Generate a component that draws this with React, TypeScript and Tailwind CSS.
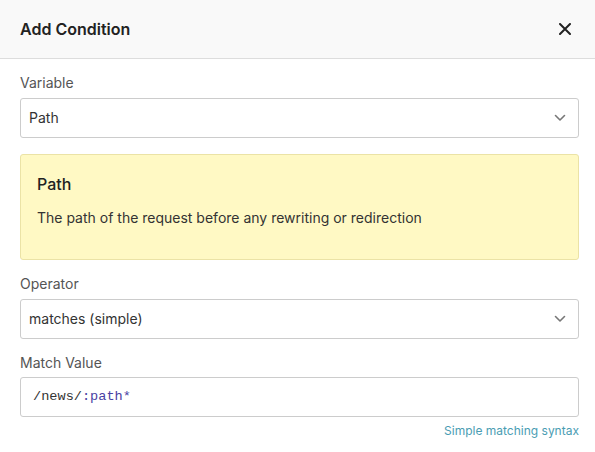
import React from 'react';

const Chevron = () => (
  <svg width="12" height="8" viewBox="0 0 12 8" className="shrink-0">
    <path d="M1.5 1.5 L6 6 L10.5 1.5" fill="none" stroke="#777" strokeWidth="1.6" strokeLinecap="round" strokeLinejoin="round" />
  </svg>
);

const Select = ({ value }: { value: string }) => (
  <div className="flex h-10 items-center justify-between rounded-[3px] border border-[#cccccc] bg-white pl-2 pr-3 text-sm text-[#333]">
    <span>{value}</span>
    <Chevron />
  </div>
);

const Label = ({ children }: { children: React.ReactNode }) => (
  <div className="mb-[5px] h-5 text-sm leading-5 text-[#555]">{children}</div>
);

export default function App() {
  return (
    <div className="h-[452px] w-[595px] bg-white font-['Inter',sans-serif]">
      <div className="flex h-[59px] items-center justify-between border-b border-[#dddddd] bg-[#f9f9f9] pl-5 pr-6">
        <h2 className="text-base font-semibold text-[#222]">Add Condition</h2>
        <button aria-label="Close" className="flex items-center">
          <svg width="12" height="12" viewBox="0 0 12 12">
            <path d="M1 1 L11 11 M11 1 L1 11" stroke="#222" strokeWidth="2" strokeLinecap="round" />
          </svg>
        </button>
      </div>

      <div className="pl-5 pr-[16px] pt-[14px]">
        <Label>Variable</Label>
        <Select value="Path" />

        <div className="mt-4 rounded-[3px] border border-[#ebe3a6] bg-[#fff9c4] px-4 pb-[31px] pt-[17px]">
          <div className="text-base font-medium leading-6 text-[#222]">Path</div>
          <p className="mt-3 text-sm leading-5 text-[#333]">
            The path of the request before any rewriting or redirection
          </p>
        </div>

        <div className="mt-[14px]">
          <Label>Operator</Label>
          <Select value="matches (simple)" />
        </div>

        <div className="mt-[14px]">
          <div className="mb-1 h-5 text-sm leading-5 text-[#555]">Match Value</div>
          <div className="flex h-10 items-center rounded-[3px] border border-[#cccccc] bg-white px-3 font-['Liberation_Mono',monospace] text-[13.6px]">
            <span className="text-[#333]">/news/</span>
            <span className="text-[#4a3fa3]">:path*</span>
          </div>
          <div className="mt-[6px] text-right text-xs leading-4 text-[#4a9db3]">
            Simple matching syntax
          </div>
        </div>
      </div>
    </div>
  );
}
